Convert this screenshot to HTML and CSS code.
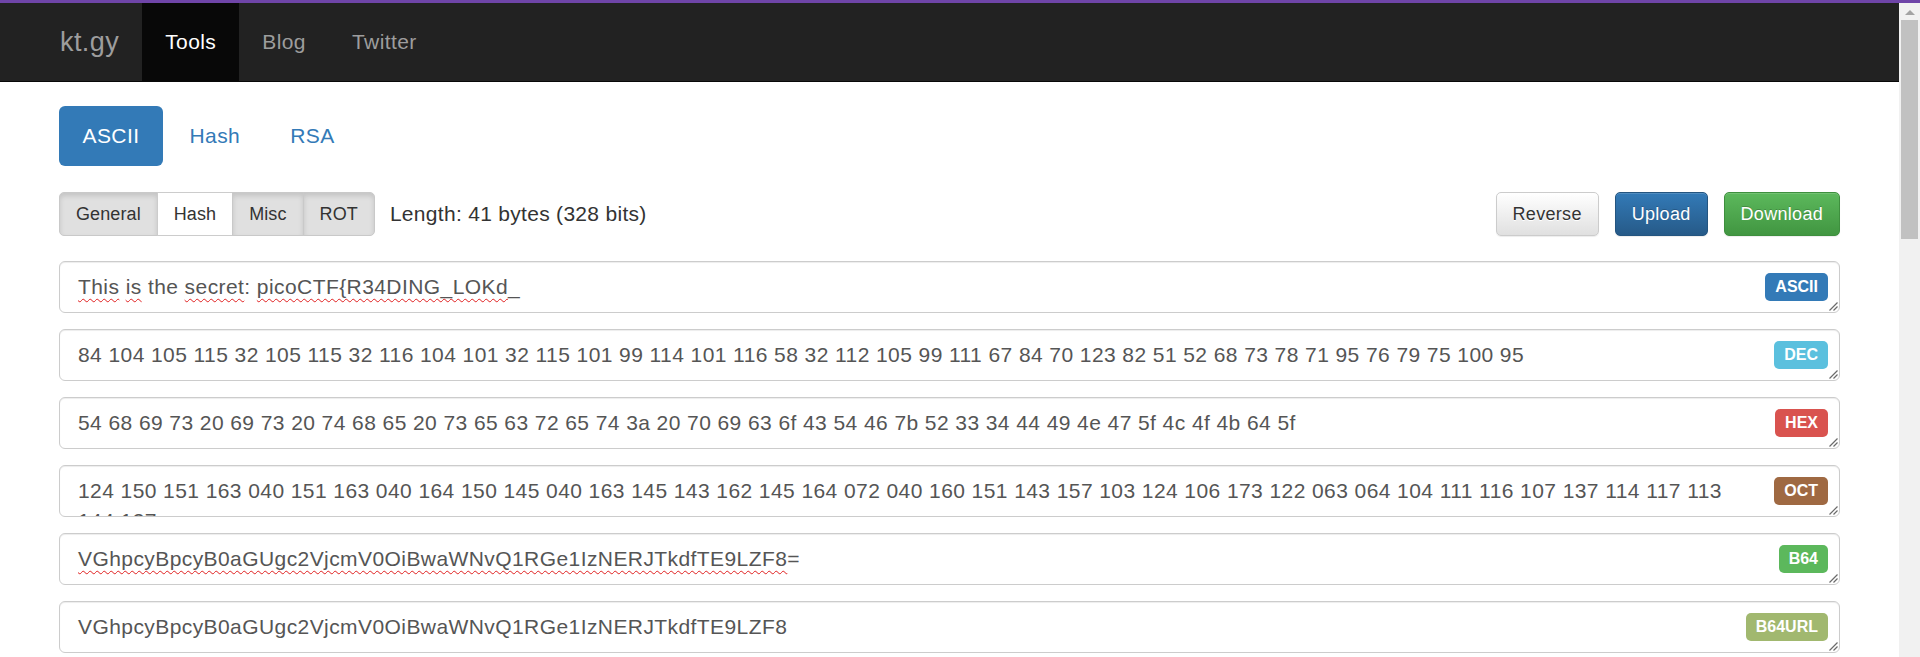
FILE: index.html
```html
<!DOCTYPE html>
<html lang="en">
<head>
<meta charset="utf-8">
<title>kt.gy tools</title>
<link rel="stylesheet" href="styles.css">
</head>
<body>
<div class="topbar"></div>
<div class="window">
  <div class="page">
    <nav class="navbar">
      <a class="brand">kt.gy</a>
      <a class="nav-link active">Tools</a>
      <a class="nav-link">Blog</a>
      <a class="nav-link">Twitter</a>
    </nav>
    <main class="content">
      <ul class="pills">
        <li class="pill active">ASCII</li>
        <li class="pill">Hash</li>
        <li class="pill">RSA</li>
      </ul>
      <div class="toolbar">
        <div class="btn-group">
          <span class="gbtn pressed">General</span>
          <span class="gbtn">Hash</span>
          <span class="gbtn pressed">Misc</span>
          <span class="gbtn pressed">ROT</span>
        </div>
        <span class="length">Length: 41 bytes (328 bits)</span>
        <div class="actions">
          <span class="btn btn-default">Reverse</span>
          <span class="btn btn-primary">Upload</span>
          <span class="btn btn-success">Download</span>
        </div>
      </div>
      <div class="fields">
        <div class="field">
          <div class="field-text"><span class="sp">This</span> <span class="sp">is</span> the <span class="sp">secret</span>: <span class="sp">picoCTF{R34DING_LOKd</span>_</div>
          <span class="tag tag-ascii">ASCII</span>
          <svg class="grip" width="10" height="10" viewBox="0 0 10 10"><path d="M9.5 1.5 L1.5 9.5 M9.5 5.5 L5.5 9.5" stroke="#6b6b6b" stroke-width="1.2" fill="none"/></svg>
        </div>
        <div class="field">
          <div class="field-text">84 104 105 115 32 105 115 32 116 104 101 32 115 101 99 114 101 116 58 32 112 105 99 111 67 84 70 123 82 51 52 68 73 78 71 95 76 79 75 100 95</div>
          <span class="tag tag-dec">DEC</span>
          <svg class="grip" width="10" height="10" viewBox="0 0 10 10"><path d="M9.5 1.5 L1.5 9.5 M9.5 5.5 L5.5 9.5" stroke="#6b6b6b" stroke-width="1.2" fill="none"/></svg>
        </div>
        <div class="field">
          <div class="field-text">54 68 69 73 20 69 73 20 74 68 65 20 73 65 63 72 65 74 3a 20 70 69 63 6f 43 54 46 7b 52 33 34 44 49 4e 47 5f 4c 4f 4b 64 5f</div>
          <span class="tag tag-hex">HEX</span>
          <svg class="grip" width="10" height="10" viewBox="0 0 10 10"><path d="M9.5 1.5 L1.5 9.5 M9.5 5.5 L5.5 9.5" stroke="#6b6b6b" stroke-width="1.2" fill="none"/></svg>
        </div>
        <div class="field">
          <div class="field-text">124 150 151 163 040 151 163 040 164 150 145 040 163 145 143 162 145 164 072 040 160 151 143 157 103 124 106 173 122 063 064 104 111 116 107 137 114 117 113 144 137</div>
          <span class="tag tag-oct">OCT</span>
          <svg class="grip" width="10" height="10" viewBox="0 0 10 10"><path d="M9.5 1.5 L1.5 9.5 M9.5 5.5 L5.5 9.5" stroke="#6b6b6b" stroke-width="1.2" fill="none"/></svg>
        </div>
        <div class="field">
          <div class="field-text"><span class="sp">VGhpcyBpcyB0aGUgc2VjcmV0OiBwaWNvQ1RGe1IzNERJTkdfTE9LZF8</span>=</div>
          <span class="tag tag-b64">B64</span>
          <svg class="grip" width="10" height="10" viewBox="0 0 10 10"><path d="M9.5 1.5 L1.5 9.5 M9.5 5.5 L5.5 9.5" stroke="#6b6b6b" stroke-width="1.2" fill="none"/></svg>
        </div>
        <div class="field">
          <div class="field-text">VGhpcyBpcyB0aGUgc2VjcmV0OiBwaWNvQ1RGe1IzNERJTkdfTE9LZF8</div>
          <span class="tag tag-b64url">B64URL</span>
          <svg class="grip" width="10" height="10" viewBox="0 0 10 10"><path d="M9.5 1.5 L1.5 9.5 M9.5 5.5 L5.5 9.5" stroke="#6b6b6b" stroke-width="1.2" fill="none"/></svg>
        </div>
      </div>
    </main>
  </div>
  <div class="scrollbar">
    <div class="sb-arrow"></div>
    <div class="sb-thumb"></div>
  </div>
</div>
</body>
</html>
```
FILE: styles.css
```css
* { box-sizing: border-box; }
html, body { margin: 0; padding: 0; height: 657px; overflow: hidden; }
body {
  font-family: "Liberation Sans", Arial, Helvetica, sans-serif;
  font-size: 21px;
  letter-spacing: 0.42px;
  color: #333;
  background: #fff;
}
.topbar { height: 3px; background: #6f45a8; }
.window { display: flex; height: 654px; }
.page { flex: 1; overflow: hidden; min-width: 0; }

/* navbar */
.navbar {
  display: flex;
  align-items: stretch;
  height: 79px;
  background: #222;
  border-bottom: 1px solid #080808;
  padding-left: 37px;
}
.brand {
  color: #9d9d9d;
  font-size: 27px;
  line-height: 78px;
  padding: 0 23px 0 23px;
}
.nav-link {
  color: #9d9d9d;
  line-height: 78px;
  padding: 0 23px;
}
.nav-link.active { background: #080808; color: #fff; }

/* content */
.content { padding: 24px 59px 0; }
.pills { list-style: none; margin: 0; padding: 0; display: flex; gap: 3px; }
.pill {
  height: 60px;
  line-height: 60px;
  padding: 0 23.5px;
  border-radius: 6px;
  color: #337ab7;
}
.pill.active { background: #337ab7; color: #fff; }

.toolbar { display: flex; align-items: center; margin-top: 26px; height: 44px; }
.btn-group { display: flex; }
.gbtn {
  height: 44px;
  line-height: 42px;
  font-size: 18px;
  letter-spacing: 0.1px;
  padding: 0 16px;
  border: 1px solid #ccc;
  background: #fff;
  color: #333;
  margin-left: -1px;
}
.gbtn:first-child { margin-left: 0; border-radius: 5px 0 0 5px; }
.gbtn:last-child { border-radius: 0 5px 5px 0; }
.gbtn.pressed {
  background: #e0e0e0;
  border-color: #c9c9c9;
  box-shadow: inset 0 3px 5px rgba(0,0,0,.125);
}
.length { margin-left: 15px; letter-spacing: 0.3px; }
.actions { margin-left: auto; display: flex; gap: 16px; }
.btn {
  height: 44px;
  line-height: 42px;
  font-size: 18px;
  letter-spacing: 0.3px;
  padding: 0 16px;
  border: 1px solid;
  border-radius: 5px;
  box-shadow: inset 0 1px 0 rgba(255,255,255,.15), 0 1px 1px rgba(0,0,0,.075);
  text-shadow: 0 -1px 0 rgba(0,0,0,.2);
}
.btn-default {
  background: linear-gradient(#fff, #e0e0e0);
  border-color: #ccc;
  color: #333;
  text-shadow: 0 1px 0 #fff;
}
.btn-primary {
  background: linear-gradient(#337ab7, #265a88);
  border-color: #245580;
  color: #fff;
}
.btn-success {
  background: linear-gradient(#5cb85c, #419641);
  border-color: #3e8f3e;
  color: #fff;
}

/* fields */
.fields { margin-top: 25px; display: flex; flex-direction: column; gap: 16px; }
.field {
  position: relative;
  height: 52px;
  flex: none;
  border: 1px solid #ccc;
  border-radius: 6px;
  box-shadow: inset 0 1px 1px rgba(0,0,0,.075);
  padding: 10px 18px 0;
  overflow: hidden;
  color: #555;
}
.field-text { line-height: 30px; padding-right: 70px; }
.sp {
  text-decoration: underline wavy #e02020;
  text-decoration-thickness: 1px;
  text-underline-offset: 4px;
}
.tag {
  position: absolute;
  right: 11px;
  top: 11px;
  font-size: 16px;
  font-weight: bold;
  letter-spacing: 0;
  line-height: 1;
  padding: 6px 10px 6px;
  border-radius: 5px;
  color: #fff;
}
.tag-ascii { background: #337ab7; }
.tag-dec { background: #5bc0de; }
.tag-hex { background: #d9534f; }
.tag-oct { background: #9f6942; }
.tag-b64 { background: #5cb85c; }
.tag-b64url { background: #a1b86f; }
.grip { position: absolute; right: 1px; bottom: 1px; }

/* scrollbar */
.scrollbar {
  width: 21px;
  background: #f1f1f1;
  display: flex;
  flex-direction: column;
  align-items: center;
}
.sb-arrow {
  margin-top: 7px;
  width: 0;
  height: 0;
  border-left: 5px solid transparent;
  border-right: 5px solid transparent;
  border-bottom: 5px solid #a3a3a3;
}
.sb-thumb {
  margin-top: 5px;
  width: 17px;
  height: 219px;
  background: #c1c1c1;
}
```
